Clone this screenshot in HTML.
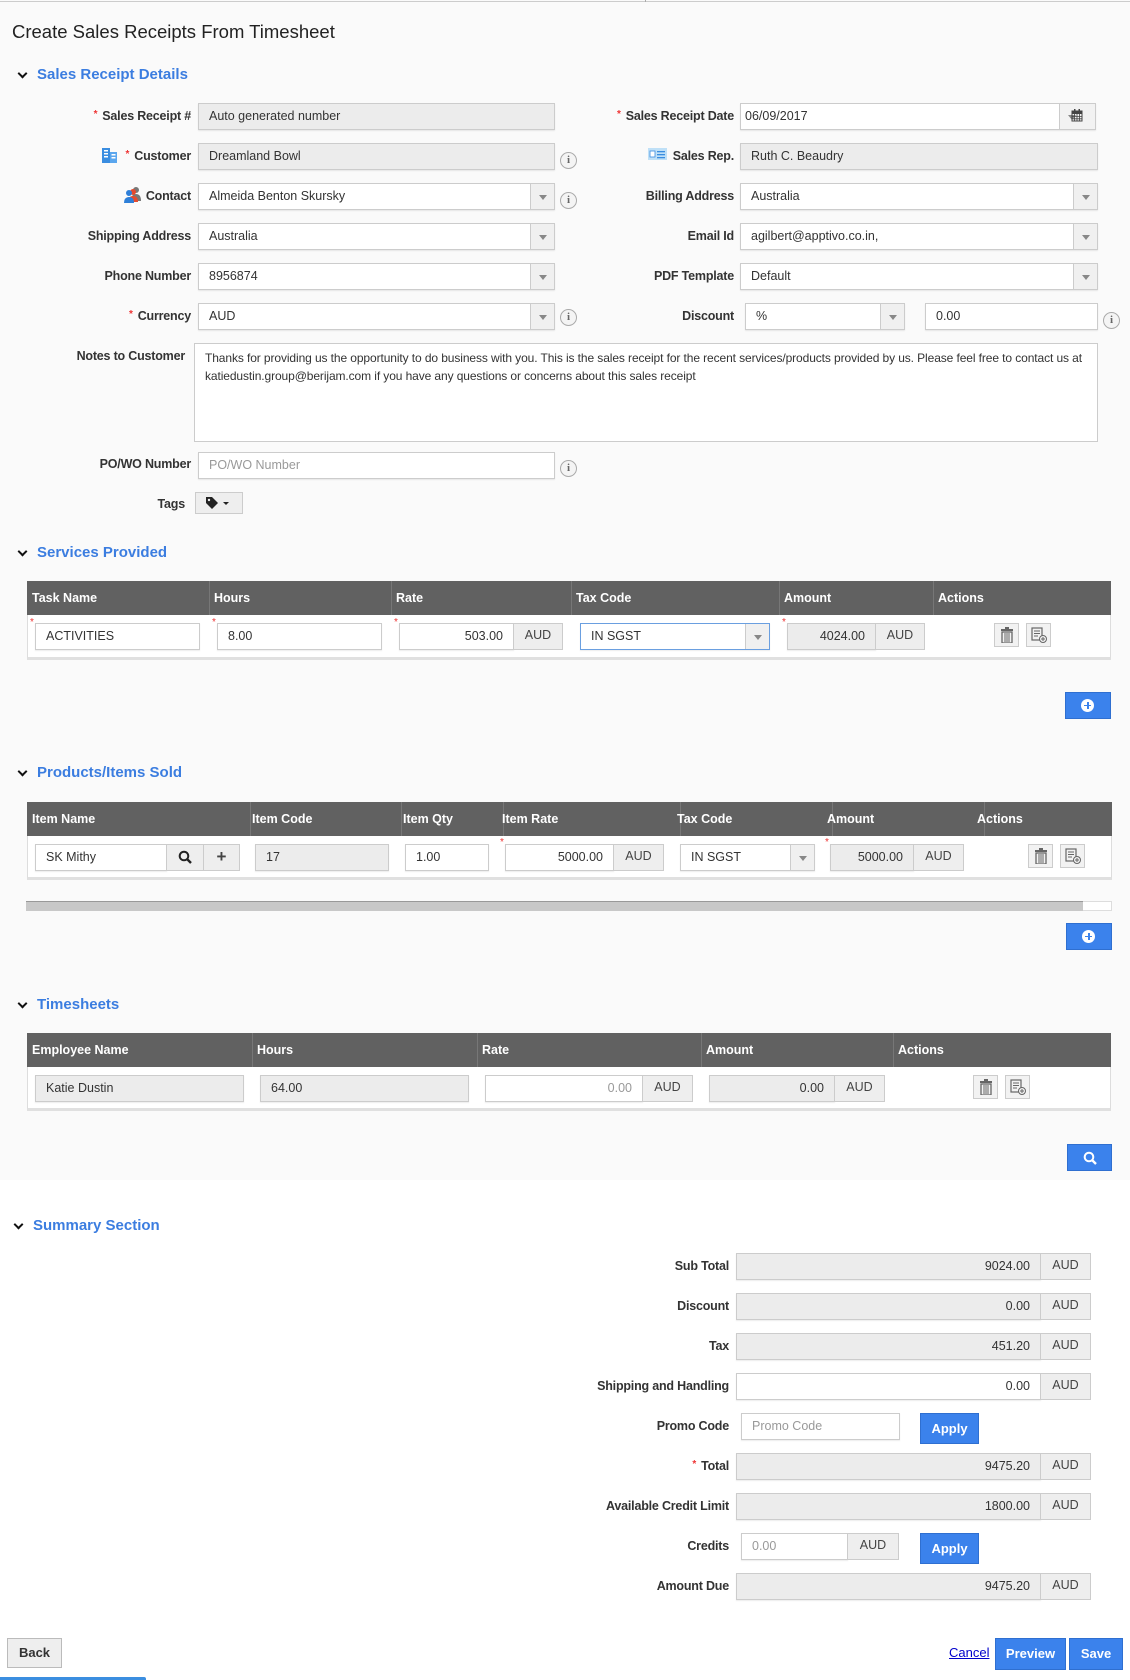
<!DOCTYPE html>
<html><head><meta charset="utf-8"><style>
*{box-sizing:border-box;margin:0;padding:0}
body{width:1130px;height:1680px;position:relative;background:#fafafa;font-family:"Liberation Sans",sans-serif;color:#333;overflow:hidden}
.a{position:absolute}
.lbl{position:absolute;font-size:12.5px;font-weight:bold;color:#333;text-align:right;white-space:nowrap;letter-spacing:-0.2px}
.req{color:#e33;font-size:10px;vertical-align:top;margin-right:5px}
.in{position:absolute;height:27px;border:1px solid #ccc;background:#fff;font-size:12.5px;line-height:25px;padding-left:10px;color:#333;white-space:nowrap;overflow:hidden;box-shadow:0 1px 1px rgba(0,0,0,.08)}
.ro{background:#ececec}
.r{text-align:right;padding-right:10px;padding-left:0}
.dd{position:absolute;right:0;top:0;bottom:0;width:24px;border-left:1px solid #ccc;background:#f0f0f0}
.dd:after{content:"";position:absolute;left:8px;top:11px;border-left:4px solid transparent;border-right:4px solid transparent;border-top:5px solid #888}
.aud{position:absolute;height:27px;border:1px solid #ccc;background:#eee;font-size:12.5px;line-height:23px;text-align:center;color:#444}
.info{position:absolute;width:17px;height:17px;border:1px solid #aaa;border-radius:50%;background:#f4f4f4;font:bold 11px "Liberation Serif",serif;color:#666;text-align:center;line-height:15px}
.sec{position:absolute;font-size:15px;font-weight:bold;color:#3b7de0}
.chev{position:absolute;width:7px;height:7px;border-right:2.5px solid #111;border-bottom:2.5px solid #111;transform:rotate(45deg)}
.th{position:absolute;background:#616161;height:34px}
.th span{position:absolute;top:10px;color:#fff;font-size:12.5px;font-weight:bold}
.th i{position:absolute;top:0;bottom:0;width:1px;background:#777}
.tb{position:absolute;background:#fff;border:1px solid #ddd;border-top:none;border-bottom:3px solid #e0e0e0}
.st{position:absolute;color:#e33;font-size:10px}
.ib{position:absolute;width:25px;height:24px;border:1px solid #ccc;background:#f2f2f2}
.btn{position:absolute;background:#3b82ec;border:1px solid #2f6fd0;color:#fff;font-size:13px;font-weight:bold;text-align:center}
</style></head><body>
<div class="a" style="left:0;top:1px;width:1130px;height:1px;background:#ccc"></div>
<div class="a" style="left:645px;top:0;width:1px;height:2px;background:#aaa"></div>
<div class="a" style="left:0;top:1180px;width:1130px;height:500px;background:#fff"></div>
<div class="a" style="left:12px;top:21px;font-size:18.5px;color:#222">Create Sales Receipts From Timesheet</div>

<div class="chev" style="left:19px;top:70px"></div>
<div class="sec" style="left:37px;top:66px">Sales Receipt Details</div>

<div class="lbl" style="right:939px;top:109px"><span class="req">*</span>Sales Receipt #</div>
<div class="in ro" style="left:198px;top:103px;width:357px">Auto generated number</div>

<svg class="a" style="left:101px;top:146px" width="17" height="17" viewBox="0 0 17 17"><rect x="1" y="2" width="8" height="15" fill="#3a8de0"/><rect x="9" y="6" width="7" height="11" fill="#5aa6ee"/><g fill="#fff"><rect x="3" y="4" width="4" height="1.5"/><rect x="3" y="7" width="4" height="1.5"/><rect x="3" y="10" width="4" height="1.5"/><rect x="10.5" y="8" width="4" height="1.5"/><rect x="10.5" y="11" width="4" height="1.5"/></g></svg>
<div class="lbl" style="right:939px;top:149px"><span class="req">*</span>Customer</div>
<div class="in ro" style="left:198px;top:143px;width:357px">Dreamland Bowl</div>
<div class="info" style="left:560px;top:152px">i</div>

<svg class="a" style="left:124px;top:186px" width="18" height="17" viewBox="0 0 18 17"><circle cx="12" cy="4" r="3" fill="#777"/><path d="M7 15 Q7 8 12 8 Q17 8 17 15Z" fill="#777"/><circle cx="9" cy="6" r="3" fill="#e64a2e"/><path d="M4 16 Q4 10 9 10 Q14 10 14 16Z" fill="#e64a2e"/><circle cx="5" cy="7" r="3" fill="#2e7fd8"/><path d="M0 17 Q0 11 5 11 Q10 11 10 17Z" fill="#2e7fd8"/></svg>
<div class="lbl" style="right:939px;top:189px">Contact</div>
<div class="in" style="left:198px;top:183px;width:357px">Almeida Benton Skursky<div class="dd"></div></div>
<div class="info" style="left:560px;top:192px">i</div>

<div class="lbl" style="right:939px;top:229px">Shipping Address</div>
<div class="in" style="left:198px;top:223px;width:357px">Australia<div class="dd"></div></div>

<div class="lbl" style="right:939px;top:269px">Phone Number</div>
<div class="in" style="left:198px;top:263px;width:357px">8956874<div class="dd"></div></div>

<div class="lbl" style="right:939px;top:309px"><span class="req">*</span>Currency</div>
<div class="in" style="left:198px;top:303px;width:357px">AUD<div class="dd"></div></div>
<div class="info" style="left:560px;top:309px">i</div>

<div class="lbl" style="right:396px;top:109px"><span class="req">*</span>Sales Receipt Date</div>
<div class="in" style="left:740px;top:103px;width:356px;padding-left:4px">06/09/2017<div class="dd" style="width:36px;background:#f2f2f2"></div></div>
<svg class="a" style="left:1071px;top:109px" width="12" height="13" viewBox="0 0 12 13"><rect x="1" y="2" width="10" height="10" fill="none" stroke="#444"/><rect x="1" y="2" width="10" height="3" fill="#444"/><path d="M1 7.5H11M1 9.8H11M3.5 5V12M6 5V12M8.5 5V12" stroke="#444" stroke-width=".8"/><rect x="3" y="0" width="1.5" height="3" fill="#444"/><rect x="7.5" y="0" width="1.5" height="3" fill="#444"/></svg>

<svg class="a" style="left:648px;top:148px" width="19" height="12" viewBox="0 0 19 12"><rect x="0" y="0" width="19" height="12" fill="#bfe0f7"/><rect x="2" y="3" width="5" height="6" fill="#fff" stroke="#3a8de0" stroke-width=".8"/><rect x="9" y="3" width="8" height="1.3" fill="#3a8de0"/><rect x="9" y="6" width="8" height="1.3" fill="#3a8de0"/><rect x="9" y="9" width="8" height="1.3" fill="#3a8de0"/></svg>
<div class="lbl" style="right:396px;top:149px">Sales Rep.</div>
<div class="in ro" style="left:740px;top:143px;width:358px">Ruth C. Beaudry</div>

<div class="lbl" style="right:396px;top:189px">Billing Address</div>
<div class="in" style="left:740px;top:183px;width:358px">Australia<div class="dd"></div></div>
<div class="lbl" style="right:396px;top:229px">Email Id</div>
<div class="in" style="left:740px;top:223px;width:358px">agilbert@apptivo.co.in,<div class="dd"></div></div>
<div class="lbl" style="right:396px;top:269px">PDF Template</div>
<div class="in" style="left:740px;top:263px;width:358px">Default<div class="dd"></div></div>
<div class="lbl" style="right:396px;top:309px">Discount</div>
<div class="in" style="left:745px;top:303px;width:160px">%<div class="dd"></div></div>
<div class="in" style="left:925px;top:303px;width:173px">0.00</div>
<div class="info" style="left:1103px;top:312px">i</div>

<div class="lbl" style="right:945px;top:349px">Notes to Customer</div>
<div class="in" style="left:194px;top:343px;width:904px;height:99px;white-space:normal;line-height:18px;padding-top:5px;padding-right:6px;font-size:12px;letter-spacing:-0.1px;box-shadow:none">Thanks for providing us the opportunity to do business with you. This is the sales receipt for the recent services/products provided by us. Please feel free to contact us at katiedustin.group@berijam.com if you have any questions or concerns about this sales receipt</div>

<div class="lbl" style="right:939px;top:457px">PO/WO Number</div>
<div class="in" style="left:198px;top:452px;width:357px;color:#999">PO/WO Number</div>
<div class="info" style="left:560px;top:460px">i</div>

<div class="lbl" style="right:945px;top:497px">Tags</div>
<div class="a" style="left:195px;top:492px;width:48px;height:22px;border:1px solid #ccc;background:#eee"></div>
<svg class="a" style="left:205px;top:496px" width="28" height="14" viewBox="0 0 28 14"><path d="M1 1H7L13 7L7 13L1 7Z" fill="#222"/><circle cx="4" cy="4" r="1.2" fill="#eee"/><path d="M18 6H24L21 9Z" fill="#222"/></svg>

<!-- Services -->
<div class="chev" style="left:19px;top:548px"></div>
<div class="sec" style="left:37px;top:544px">Services Provided</div>
<div class="th" style="left:27px;top:581px;width:1084px"><span style="left:5px">Task Name</span><i style="left:182px"></i><span style="left:187px">Hours</span><i style="left:364px"></i><span style="left:369px">Rate</span><i style="left:544px"></i><span style="left:549px">Tax Code</span><i style="left:752px"></i><span style="left:757px">Amount</span><i style="left:906px"></i><span style="left:911px">Actions</span></div>
<div class="tb" style="left:27px;top:615px;width:1084px;height:45px"></div>
<span class="st" style="left:30px;top:617px">*</span><div class="in" style="left:35px;top:623px;width:165px">ACTIVITIES</div>
<span class="st" style="left:212px;top:617px">*</span><div class="in" style="left:217px;top:623px;width:165px">8.00</div>
<span class="st" style="left:394px;top:617px">*</span><div class="in r" style="left:399px;top:623px;width:115px">503.00</div><div class="aud" style="left:513px;top:623px;width:50px">AUD</div>
<div class="in" style="left:580px;top:623px;width:190px;border-color:#6a9fe0">IN SGST<div class="dd"></div></div>
<span class="st" style="left:782px;top:617px">*</span><div class="in ro r" style="left:787px;top:623px;width:89px">4024.00</div><div class="aud" style="left:875px;top:623px;width:50px">AUD</div>
<div class="ib" style="left:994px;top:623px"></div><div class="ib" style="left:1026px;top:623px"></div>
<svg class="a" style="left:999px;top:627px" width="16" height="16" viewBox="0 0 16 16"><rect x="2" y="2" width="12" height="2" fill="#666"/><rect x="6" y="0" width="4" height="2" fill="#666"/><rect x="3" y="5" width="10" height="11" fill="none" stroke="#666" stroke-width="1.3"/><path d="M6 6V15M8 6V15M10 6V15" stroke="#666"/></svg>
<svg class="a" style="left:1031px;top:627px" width="16" height="16" viewBox="0 0 16 16"><rect x="1" y="1" width="10" height="12" fill="none" stroke="#666" stroke-width="1.2"/><path d="M3 4H9M3 6.5H9M3 9H7" stroke="#666"/><circle cx="12" cy="12" r="3.5" fill="#f2f2f2" stroke="#666"/><path d="M12 10V14M10 12H14" stroke="#666"/></svg>
<div class="btn" style="left:1065px;top:692px;width:46px;height:27px"></div>
<div class="a" style="left:1081px;top:699px;width:13px;height:13px;border-radius:50%;background:#fff"></div>
<div class="a" style="left:1087px;top:702px;width:1.8px;height:7px;background:#3b82ec"></div><div class="a" style="left:1084px;top:704.6px;width:7px;height:1.8px;background:#3b82ec"></div>

<!-- Products -->
<div class="chev" style="left:19px;top:768px"></div>
<div class="sec" style="left:37px;top:764px">Products/Items Sold</div>
<div class="th" style="left:27px;top:802px;width:1085px"><span style="left:5px">Item Name</span><i style="left:223px"></i><span style="left:225px">Item Code</span><i style="left:374px"></i><span style="left:376px">Item Qty</span><i style="left:476px"></i><span style="left:475px">Item Rate</span><i style="left:653px"></i><span style="left:650px">Tax Code</span><i style="left:805px"></i><span style="left:800px">Amount</span><i style="left:957px"></i><span style="left:950px">Actions</span></div>
<div class="tb" style="left:27px;top:836px;width:1085px;height:44px"></div>
<div class="in" style="left:35px;top:844px;width:132px">SK Mithy</div>
<div class="aud" style="left:166px;top:844px;width:38px"></div><div class="aud" style="left:203px;top:844px;width:37px;font-weight:bold;font-size:17px">+</div>
<svg class="a" style="left:178px;top:850px" width="14" height="14" viewBox="0 0 14 14"><circle cx="6" cy="6" r="4.3" fill="none" stroke="#222" stroke-width="2"/><path d="M9 9L13 13" stroke="#222" stroke-width="2.4"/></svg>
<div class="in ro" style="left:255px;top:844px;width:134px">17</div>
<div class="in" style="left:405px;top:844px;width:84px">1.00</div>
<span class="st" style="left:500px;top:837px">*</span><div class="in r" style="left:505px;top:844px;width:109px">5000.00</div><div class="aud" style="left:613px;top:844px;width:51px">AUD</div>
<div class="in" style="left:680px;top:844px;width:135px">IN SGST<div class="dd"></div></div>
<span class="st" style="left:825px;top:837px">*</span><div class="in ro r" style="left:830px;top:844px;width:84px">5000.00</div><div class="aud" style="left:913px;top:844px;width:51px">AUD</div>
<div class="ib" style="left:1028px;top:844px"></div><div class="ib" style="left:1060px;top:844px"></div>
<svg class="a" style="left:1033px;top:848px" width="16" height="16" viewBox="0 0 16 16"><rect x="2" y="2" width="12" height="2" fill="#666"/><rect x="6" y="0" width="4" height="2" fill="#666"/><rect x="3" y="5" width="10" height="11" fill="none" stroke="#666" stroke-width="1.3"/><path d="M6 6V15M8 6V15M10 6V15" stroke="#666"/></svg>
<svg class="a" style="left:1065px;top:848px" width="16" height="16" viewBox="0 0 16 16"><rect x="1" y="1" width="10" height="12" fill="none" stroke="#666" stroke-width="1.2"/><path d="M3 4H9M3 6.5H9M3 9H7" stroke="#666"/><circle cx="12" cy="12" r="3.5" fill="#f2f2f2" stroke="#666"/><path d="M12 10V14M10 12H14" stroke="#666"/></svg>
<div class="a" style="left:26px;top:901px;width:1086px;height:10px;background:#fff;border:1px solid #ddd"></div>
<div class="a" style="left:26px;top:901px;width:1057px;height:10px;background:#c8c8c8;border-top:1px solid #999"></div>
<div class="btn" style="left:1066px;top:923px;width:46px;height:27px"></div>
<div class="a" style="left:1082px;top:930px;width:13px;height:13px;border-radius:50%;background:#fff"></div>
<div class="a" style="left:1088px;top:933px;width:1.8px;height:7px;background:#3b82ec"></div><div class="a" style="left:1085px;top:935.6px;width:7px;height:1.8px;background:#3b82ec"></div>

<!-- Timesheets -->
<div class="chev" style="left:19px;top:1000px"></div>
<div class="sec" style="left:37px;top:996px">Timesheets</div>
<div class="th" style="left:27px;top:1033px;width:1084px"><span style="left:5px">Employee Name</span><i style="left:225px"></i><span style="left:230px">Hours</span><i style="left:450px"></i><span style="left:455px">Rate</span><i style="left:674px"></i><span style="left:679px">Amount</span><i style="left:866px"></i><span style="left:871px">Actions</span></div>
<div class="tb" style="left:27px;top:1067px;width:1084px;height:44px"></div>
<div class="in ro" style="left:35px;top:1075px;width:209px">Katie Dustin</div>
<div class="in ro" style="left:260px;top:1075px;width:209px">64.00</div>
<div class="in r" style="left:485px;top:1075px;width:158px;color:#999">0.00</div><div class="aud" style="left:642px;top:1075px;width:51px">AUD</div>
<div class="in ro r" style="left:709px;top:1075px;width:126px">0.00</div><div class="aud" style="left:834px;top:1075px;width:51px">AUD</div>
<div class="ib" style="left:973px;top:1075px"></div><div class="ib" style="left:1005px;top:1075px"></div>
<svg class="a" style="left:978px;top:1079px" width="16" height="16" viewBox="0 0 16 16"><rect x="2" y="2" width="12" height="2" fill="#666"/><rect x="6" y="0" width="4" height="2" fill="#666"/><rect x="3" y="5" width="10" height="11" fill="none" stroke="#666" stroke-width="1.3"/><path d="M6 6V15M8 6V15M10 6V15" stroke="#666"/></svg>
<svg class="a" style="left:1010px;top:1079px" width="16" height="16" viewBox="0 0 16 16"><rect x="1" y="1" width="10" height="12" fill="none" stroke="#666" stroke-width="1.2"/><path d="M3 4H9M3 6.5H9M3 9H7" stroke="#666"/><circle cx="12" cy="12" r="3.5" fill="#f2f2f2" stroke="#666"/><path d="M12 10V14M10 12H14" stroke="#666"/></svg>
<div class="btn" style="left:1067px;top:1144px;width:45px;height:27px"></div>
<svg class="a" style="left:1083px;top:1151px" width="14" height="14" viewBox="0 0 14 14"><circle cx="6" cy="6" r="4.3" fill="none" stroke="#fff" stroke-width="2"/><path d="M9 9L13 13" stroke="#fff" stroke-width="2.4"/></svg>

<!-- Summary -->
<div class="chev" style="left:15px;top:1221px"></div>
<div class="sec" style="left:33px;top:1217px">Summary Section</div>

<div class="lbl" style="right:401px;top:1259px">Sub Total</div>
<div class="in ro r" style="left:736px;top:1253px;width:305px">9024.00</div><div class="aud" style="left:1040px;top:1253px;width:51px">AUD</div>
<div class="lbl" style="right:401px;top:1299px">Discount</div>
<div class="in ro r" style="left:736px;top:1293px;width:305px">0.00</div><div class="aud" style="left:1040px;top:1293px;width:51px">AUD</div>
<div class="lbl" style="right:401px;top:1339px">Tax</div>
<div class="in ro r" style="left:736px;top:1333px;width:305px">451.20</div><div class="aud" style="left:1040px;top:1333px;width:51px">AUD</div>
<div class="lbl" style="right:401px;top:1379px">Shipping and Handling</div>
<div class="in r" style="left:736px;top:1373px;width:305px">0.00</div><div class="aud" style="left:1040px;top:1373px;width:51px">AUD</div>
<div class="lbl" style="right:401px;top:1419px">Promo Code</div>
<div class="in" style="left:741px;top:1413px;width:159px;color:#999">Promo Code</div>
<div class="btn" style="left:920px;top:1413px;width:59px;height:31px;line-height:29px">Apply</div>
<div class="lbl" style="right:401px;top:1459px"><span class="req">*</span>Total</div>
<div class="in ro r" style="left:736px;top:1453px;width:305px">9475.20</div><div class="aud" style="left:1040px;top:1453px;width:51px">AUD</div>
<div class="lbl" style="right:401px;top:1499px">Available Credit Limit</div>
<div class="in ro r" style="left:736px;top:1493px;width:305px">1800.00</div><div class="aud" style="left:1040px;top:1493px;width:51px">AUD</div>
<div class="lbl" style="right:401px;top:1539px">Credits</div>
<div class="in" style="left:741px;top:1533px;width:107px;color:#999">0.00</div><div class="aud" style="left:847px;top:1533px;width:52px">AUD</div>
<div class="btn" style="left:920px;top:1533px;width:59px;height:31px;line-height:29px">Apply</div>
<div class="lbl" style="right:401px;top:1579px">Amount Due</div>
<div class="in ro r" style="left:736px;top:1573px;width:305px">9475.20</div><div class="aud" style="left:1040px;top:1573px;width:51px">AUD</div>

<div class="a" style="left:7px;top:1638px;width:55px;height:30px;border:1px solid #bbb;background:#eee;font-size:13px;font-weight:bold;text-align:center;line-height:28px">Back</div>
<div class="a" style="left:949px;top:1645px;font-size:13px;color:#00c;text-decoration:underline">Cancel</div>
<div class="btn" style="left:995px;top:1638px;width:71px;height:32px;line-height:30px">Preview</div>
<div class="btn" style="left:1069px;top:1638px;width:54px;height:32px;line-height:30px">Save</div>
<div class="a" style="left:0;top:1677px;width:146px;height:3px;background:#3b8ee0;border-radius:0 2px 0 0"></div>
</body></html>
